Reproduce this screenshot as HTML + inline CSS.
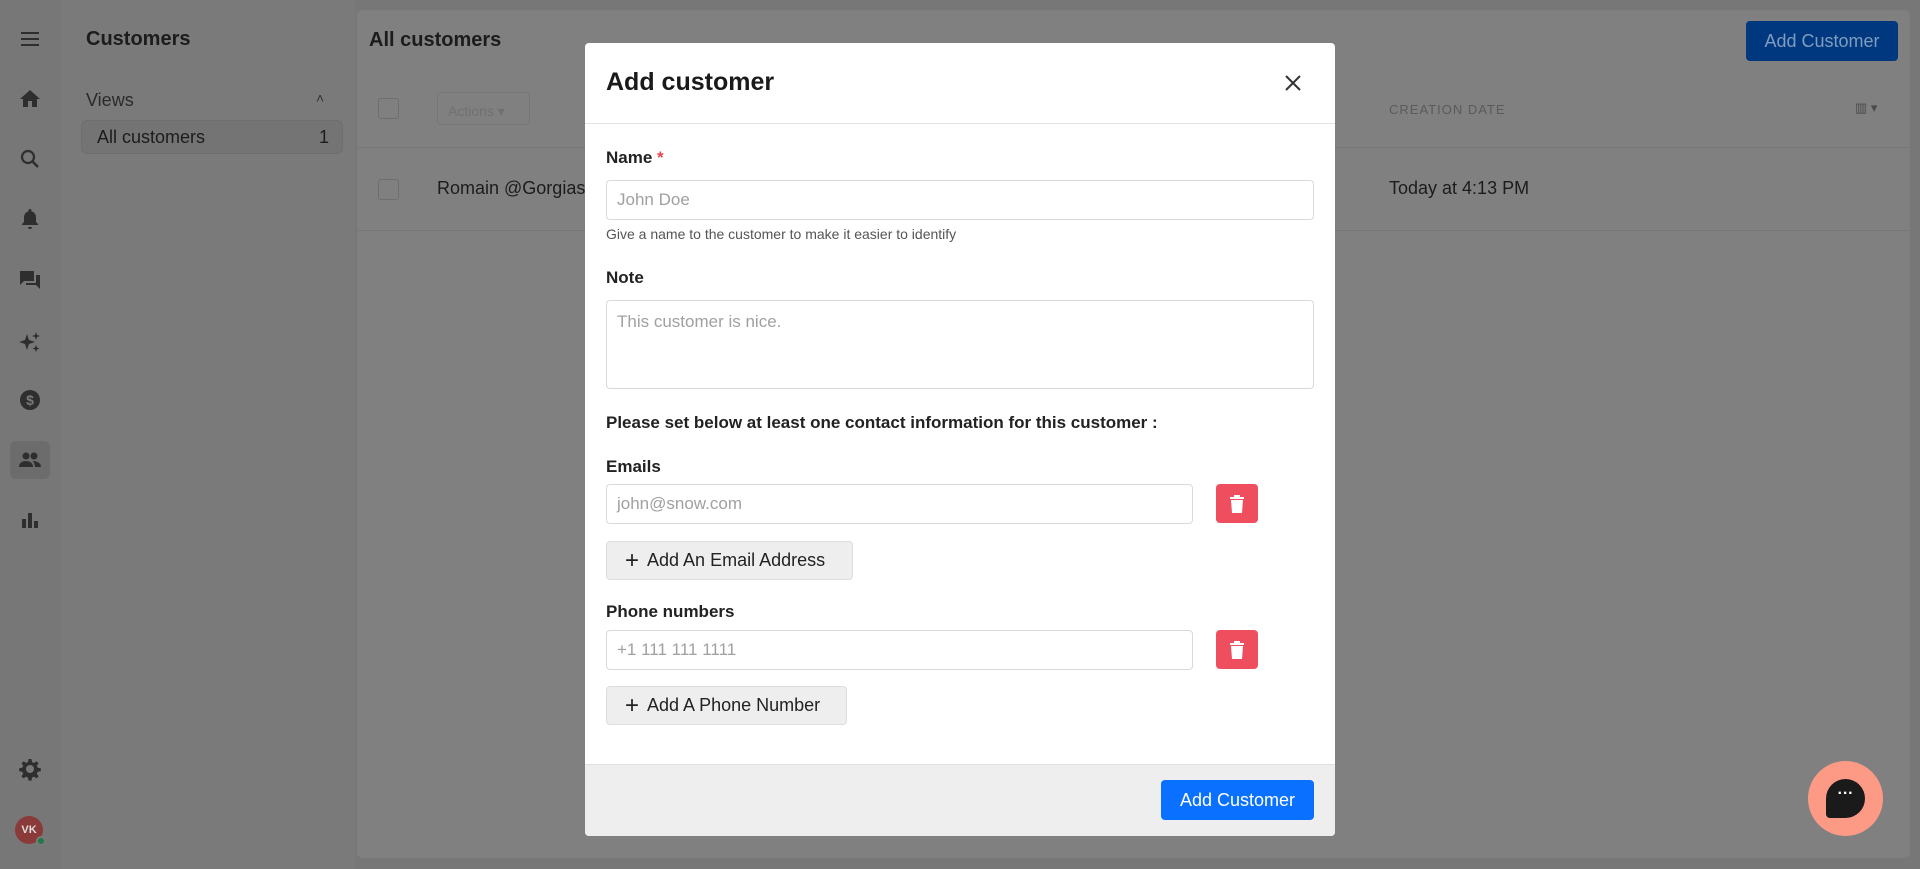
<!DOCTYPE html>
<html><head><meta charset="utf-8"><style>
*{box-sizing:border-box;margin:0;padding:0}
body{width:1920px;height:869px;overflow:hidden;background:#777;font-family:"Liberation Sans",sans-serif;position:relative;color:#111}
.a{position:absolute}
.ic{position:absolute;left:18px;width:24px;height:24px}
.card{left:357px;top:10px;width:1553px;height:848px;background:#808080;border-radius:6px}
.side2{left:61px;top:0;width:294px;height:869px;background:#7a7a7a}
.dim{color:#1c1c1c}
.cb{width:21px;height:21px;border:1px solid #6e6e6e;border-radius:3px}
.modal{left:585px;top:43px;width:750px;height:793px;background:#fff;border-radius:4px;overflow:hidden}
.lbl{position:absolute;left:21px;font-size:17px;font-weight:bold;color:#222}
.inp{position:absolute;left:21px;border:1px solid #d9d9d9;border-radius:4px;font-size:17px;color:#a0a0a0;padding-left:10px;display:flex;align-items:center}
.btn{position:absolute;left:21px;background:#eee;border:1px solid #ddd;border-radius:4px;font-size:18px;color:#222;display:flex;align-items:center;padding-left:18px;white-space:nowrap}
.del{position:absolute;left:631px;width:42px;height:39px;background:#ef4e5f;border-radius:4px;display:flex;align-items:center;justify-content:center}
</style></head><body>
<svg class="ic" style="top:27px" viewBox="0 0 24 24"><path d="M3 6h18M3 12h18M3 18h18" stroke="#2e2e2e" stroke-width="2"/></svg>
<svg class="ic" style="top:87px" viewBox="0 0 24 24"><path d="M12 3L2 12h3v8h5v-6h4v6h5v-8h3z" fill="#2e2e2e"/></svg>
<svg class="ic" style="top:147px" viewBox="0 0 24 24"><circle cx="10" cy="10" r="6" fill="none" stroke="#2e2e2e" stroke-width="2.2"/><path d="M14.5 14.5L20 20" stroke="#2e2e2e" stroke-width="2.6"/></svg>
<svg class="ic" style="top:207px" viewBox="0 0 24 24"><path d="M12 2a1.5 1.5 0 011.5 1.5v.7A6 6 0 0118 10v5l2 2v1H4v-1l2-2v-5a6 6 0 014.5-5.8v-.7A1.5 1.5 0 0112 2zM10 20h4a2 2 0 01-4 0z" fill="#2e2e2e"/></svg>
<svg class="ic" style="top:268px" viewBox="0 0 24 24"><path d="M2 3h14v10H6l-4 4zM18 7h4v14l-4-4H8v-2h10z" fill="#2e2e2e"/></svg>
<svg class="ic" style="top:330px" viewBox="0 0 24 24"><path d="M9 4l2 6 6 2-6 2-2 6-2-6-6-2 6-2zM18 2l1 3 3 1-3 1-1 3-1-3-3-1 3-1zM18 15l1 2.5 2.5 1-2.5 1-1 2.5-1-2.5-2.5-1 2.5-1z" fill="#2e2e2e"/></svg>
<svg class="ic" style="top:388px" viewBox="0 0 24 24"><circle cx="12" cy="12" r="10" fill="#2e2e2e"/><text x="12" y="17" font-size="14" text-anchor="middle" fill="#7a7a7a" font-family="Liberation Sans" font-weight="bold">$</text></svg>
<div class="a" style="left:10px;top:441px;width:40px;height:38px;background:#6c6c6c;border-radius:6px"></div>
<svg class="ic" style="top:448px" viewBox="0 0 24 24"><circle cx="8" cy="8" r="3.5" fill="#2e2e2e"/><circle cx="16" cy="8" r="3.5" fill="#2e2e2e"/><path d="M1 19c0-4 3-6 7-6s7 2 7 6zM15 13c4 0 8 2 8 6h-6c0-2-1-4-2-6z" fill="#2e2e2e"/></svg>
<svg class="ic" style="top:508px" viewBox="0 0 24 24"><path d="M4 11h4v9H4zM10 5h4v15h-4zM16 13h4v7h-4z" fill="#2e2e2e"/></svg>
<svg class="ic" style="top:757px" viewBox="0 0 24 24"><path d="M12 8a4 4 0 100 8 4 4 0 000-8zm-1.5-6h3l.5 3 2 1 2.5-1.8 2.1 2.1L18.8 8.8l1 2 3 .5v3l-3 .5-1 2 1.8 2.5-2.1 2.1-2.5-1.8-2 1-.5 3h-3l-.5-3-2-1-2.5 1.8-2.1-2.1 1.8-2.5-1-2-3-.5v-3l3-.5 1-2L3.6 6.3l2.1-2.1L8 6l2-1z" fill="#2e2e2e" fill-rule="evenodd"/></svg>
<div class="a" style="left:15px;top:816px;width:28px;height:28px;border-radius:50%;background:#8a3a38;color:#ddd;font-size:11px;font-weight:bold;display:flex;align-items:center;justify-content:center">VK</div>
<div class="a" style="left:36px;top:836px;width:10px;height:10px;border-radius:50%;background:#1f7a4a;border:2px solid #7a7a7a"></div>
<div class="a side2"></div>
<div class="a dim" style="left:86px;top:28px;font-size:20px;font-weight:bold">Customers</div>
<div class="a" style="left:86px;top:90px;font-size:18px;color:#2a2a2a">Views</div>
<div class="a" style="left:316px;top:90px;font-size:14px;color:#333">˄</div>
<div class="a" style="left:81px;top:120px;width:262px;height:34px;background:#747474;border:1px solid #6e6e6e;border-radius:6px"></div>
<div class="a dim" style="left:97px;top:127px;font-size:18px">All customers</div>
<div class="a dim" style="left:319px;top:127px;font-size:18px">1</div>
<div class="a card"></div>
<div class="a dim" style="left:369px;top:29px;font-size:20px;font-weight:bold">All customers</div>
<div class="a" style="left:1746px;top:21px;width:152px;height:40px;background:#00387f;border-radius:4px;color:#7f9cbf;font-size:18px;display:flex;align-items:center;justify-content:center">Add Customer</div>
<div class="a cb" style="left:378px;top:98px"></div>
<div class="a" style="left:437px;top:92px;width:93px;height:33px;border:1px solid #777;border-radius:4px;color:#707070;font-size:14px;padding:10px 0 0 10px">Actions ▾</div>
<div class="a" style="left:1389px;top:102px;font-size:13px;color:#5a5a5a;letter-spacing:1px">CREATION DATE</div>
<div class="a" style="left:1855px;top:100px;font-size:13px;color:#4a4a4a">▥ ▾</div>
<div class="a" style="left:357px;top:147px;width:1553px;height:1px;background:#777"></div>
<div class="a cb" style="left:378px;top:179px"></div>
<div class="a dim" style="left:437px;top:178px;font-size:18px">Romain @Gorgias</div>
<div class="a dim" style="left:1389px;top:178px;font-size:18px">Today at 4:13 PM</div>
<div class="a" style="left:357px;top:230px;width:1553px;height:1px;background:#777"></div>
<div class="a modal">
 <div class="a" style="left:21px;top:25px;font-size:25px;font-weight:bold;color:#1a1a1a">Add customer</div>
 <svg class="a" style="left:699px;top:31px" width="18" height="18" viewBox="0 0 18 18"><path d="M2 2l14 14M16 2L2 16" stroke="#333" stroke-width="2"/></svg>
 <div class="a" style="left:0;top:80px;width:750px;height:1px;background:#e3e3e3"></div>
 <div class="lbl" style="top:105px">Name <span style="color:#e2474b">*</span></div>
 <div class="inp" style="top:137px;width:708px;height:40px">John Doe</div>
 <div class="a" style="left:21px;top:183px;font-size:14px;color:#555">Give a name to the customer to make it easier to identify</div>
 <div class="lbl" style="top:225px">Note</div>
 <div class="inp" style="top:257px;width:708px;height:89px;align-items:flex-start;padding-top:11px">This customer is nice.</div>
 <div class="lbl" style="top:370px">Please set below at least one contact information for this customer :</div>
 <div class="lbl" style="top:414px">Emails</div>
 <div class="inp" style="top:441px;width:587px;height:40px">john@snow.com</div>
 <div class="del" style="top:441px"><svg width="16" height="20" viewBox="0 0 16 20"><path d="M5 1h6v2h4v2H1V3h4zM2 6h12l-1 13H3z" fill="#fff"/></svg></div>
 <div class="btn" style="top:498px;width:247px;height:39px"><span style="font-size:24px;margin-right:8px;font-weight:300">+</span>Add An Email Address</div>
 <div class="lbl" style="top:559px">Phone numbers</div>
 <div class="inp" style="top:587px;width:587px;height:40px">+1 111 111 1111</div>
 <div class="del" style="top:587px"><svg width="16" height="20" viewBox="0 0 16 20"><path d="M5 1h6v2h4v2H1V3h4zM2 6h12l-1 13H3z" fill="#fff"/></svg></div>
 <div class="btn" style="top:643px;width:241px;height:39px"><span style="font-size:24px;margin-right:8px;font-weight:300">+</span>Add A Phone Number</div>
 <div class="a" style="left:0;top:721px;width:750px;height:72px;background:#eee;border-top:1px solid #e0e0e0"></div>
 <div class="a" style="left:576px;top:737px;width:153px;height:40px;background:#0a70ff;border-radius:4px;color:#fff;font-size:18px;display:flex;align-items:center;justify-content:center">Add Customer</div>
</div>
<div class="a" style="left:1808px;top:761px;width:75px;height:75px;border-radius:50%;background:#fd9a86"></div>
<div class="a" style="left:1826px;top:779px;width:39px;height:39px;border-radius:50% 50% 50% 10%;background:#1a1a1a;color:#fff;font-size:16px;font-weight:bold;text-align:center;line-height:30px">···</div>
</body></html>
